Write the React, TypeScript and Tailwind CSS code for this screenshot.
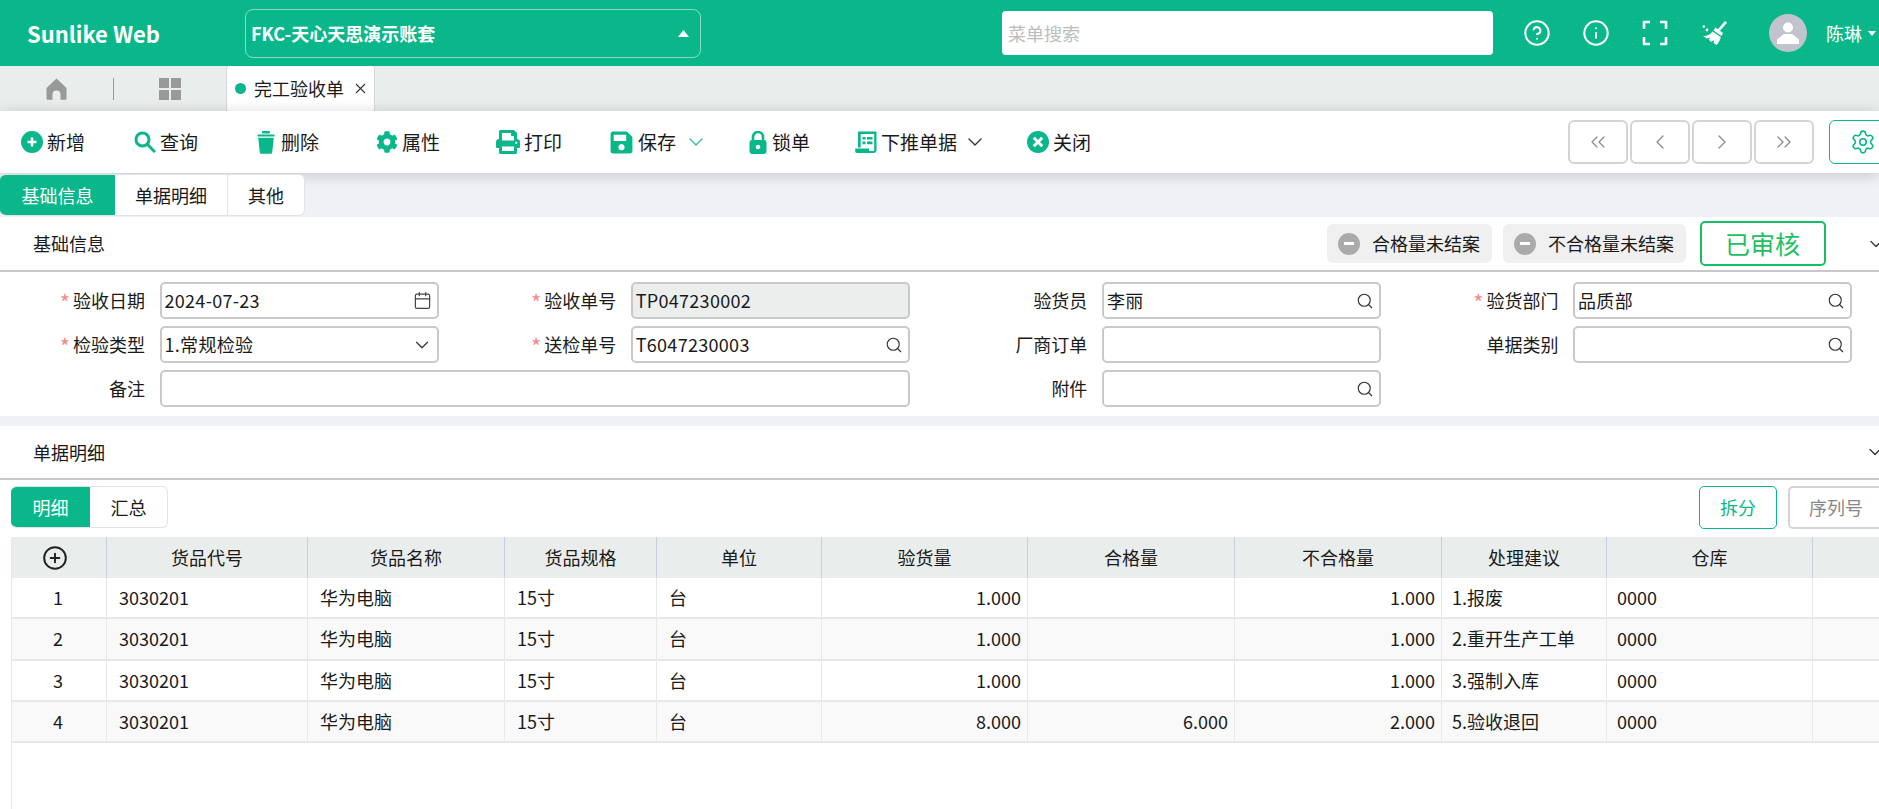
import React from 'react';
import {
  Calendar,
  ChevronDown,
  ChevronLeft,
  ChevronRight,
  ChevronsLeft,
  ChevronsRight,
  CircleHelp,
  CirclePlus,
  Info,
  Search,
  Settings,
  X,
} from 'lucide-react';
import { FaCog, FaPrint, FaSave } from 'react-icons/fa';

const PlusCircleIcon = () => (
  <svg width="22" height="22" viewBox="0 0 22 22">
    <circle cx="11" cy="11" r="11" fill="#0ab78b" />
    <path d="M11 6.5v9M6.5 11h9" stroke="#fff" strokeWidth="2.6" />
  </svg>
);

const CloseCircleIcon = () => (
  <svg width="22" height="22" viewBox="0 0 22 22">
    <circle cx="11" cy="11" r="11" fill="#0ab78b" />
    <path d="M6.8 6.8l8.4 8.4M15.2 6.8l-8.4 8.4" stroke="#fff" strokeWidth="3" />
  </svg>
);

const SearchIcon = () => (
  <svg width="22" height="22" viewBox="0 0 22 22" fill="none" stroke="#0ab78b" strokeWidth="3">
    <circle cx="8.5" cy="8.5" r="6.5" />
    <path d="M13.5 13.5 21 21" />
  </svg>
);

const TrashIcon = () => (
  <svg className="mr-[2px]" width="18" height="23" viewBox="0 0 18 23" fill="#0ab78b">
    <rect x="5" y="0" width="8" height="2.4" rx="1" />
    <rect x="0.5" y="3.4" width="17" height="2.2" rx="0.6" />
    <path d="M1.2 6.8h15.6l-1.6 14.6a1.4 1.4 0 0 1-1.4 1.3H4.2a1.4 1.4 0 0 1-1.4-1.3z" />
  </svg>
);

const LockIcon = () => (
  <svg className="mr-[1px]" width="18" height="23" viewBox="0 0 18 23">
    <path d="M4 10V6a5 5 0 0 1 10 0v4" fill="none" stroke="#0ab78b" strokeWidth="2.6" />
    <rect x="0.5" y="9" width="17" height="14" rx="2.4" fill="#0ab78b" />
    <circle cx="9" cy="16" r="2.3" fill="#fff" />
  </svg>
);

const PushIcon = () => (
  <svg width="22" height="23" viewBox="0 0 22 23" fill="#0ab78b">
    <path d="M3 0.5h18.5v18.5a3 3 0 0 1-3 3H2a1.8 1.8 0 0 1-1.8-1.8v-2.7h13.8v2.5h4a1.2 1.2 0 0 0 1.2-1.3V3H5.7v13.5H3z" />
    <path d="M7.5 6h3v2.6h-3zM12 6h5.5v2.6H12zM7.5 10.6h3v2.6h-3zM12 10.6h5.5v2.6H12z" />
  </svg>
);

const FullscreenIcon = () => (
  <svg width="26" height="26" viewBox="0 0 26 26" fill="none" stroke="#fff" strokeWidth="2.6" strokeLinejoin="round">
    <path d="M2 9V2h6M18 2h6v7M24 17v7h-6M8 24H2v-7" />
  </svg>
);

const BroomIcon = () => (
  <svg width="25" height="24" viewBox="0 0 25 24" fill="#fff">
    <path d="M24 0.8 16.5 9.5" stroke="#fff" strokeWidth="2.6" fill="none" />
    <path d="M13.5 6.5 21 12 19.5 15 11.5 9.5z" />
    <path d="M10.5 10.5 18.8 16c-.6 3-2.2 5.6-4.3 8l-3-2.2.8-2.8-3.2 2-2.2-2.4 1.4-2-3.4 1L1 15.2c4.2-.2 7.4-1.6 9.5-4.7z" />
    <circle cx="1.8" cy="5.5" r="1.2" />
    <circle cx="5" cy="9" r="1.4" />
  </svg>
);

const HomeIcon = () => (
  <svg width="21" height="22" viewBox="0 0 21 22" fill="#999">
    <path d="M10.5 0.5 20.5 10v10.5a1.2 1.2 0 0 1-1.2 1.2h-4.8v-5.2a4 4 0 0 0-8 0v5.2H1.7a1.2 1.2 0 0 1-1.2-1.2V10z" />
  </svg>
);

const AvatarIcon = () => (
  <div className="flex h-[38px] w-[38px] items-center justify-center rounded-full bg-[#c1c4cc]">
    <svg width="24" height="24" viewBox="0 0 24 24" fill="#fff">
      <circle cx="12" cy="6.5" r="5" />
      <path d="M1 23v-4.5l7-5.5h8l7 5.5V23z" />
    </svg>
  </div>
);

const toolbarItems = [
  { label: '新增', width: 'w-[113px]', icon: <PlusCircleIcon /> },
  { label: '查询', width: 'w-[123px]', icon: <SearchIcon /> },
  { label: '删除', width: 'w-[119px]', icon: <TrashIcon /> },
  { label: '属性', width: 'w-[120px]', icon: <FaCog size={22} color="#0ab78b" /> },
  { label: '打印', width: 'w-[113px]', icon: <FaPrint size={24} color="#0ab78b" /> },
  { label: '保存', width: 'w-[140px]', icon: <FaSave size={25} color="#0ab78b" />, caret: 'ml-[8px] text-[#2fc19c]' },
  { label: '锁单', width: 'w-[106px]', icon: <LockIcon /> },
  { label: '下推单据', width: 'w-[172px]', icon: <PushIcon />, caret: 'ml-[6px] text-[#333]' },
  { label: '关闭', width: 'w-[100px]', icon: <CloseCircleIcon /> },
];

const Label = ({ text, required }: { text: string; required?: boolean }) => (
  <div className="flex w-[145px] shrink-0 items-center justify-end text-[18px] text-[#1a1a1a]">
    {required && <span className="mr-[3px] text-[22px] leading-none text-[#f78989]">*</span>}
    {text}
  </div>
);

const Input = ({
  value,
  icon,
  disabled,
  wide,
}: {
  value?: string;
  icon?: 'search' | 'calendar' | 'down';
  disabled?: boolean;
  wide?: boolean;
}) => (
  <div
    className={`ml-[14.5px] flex h-[37px] items-center justify-between rounded-[5px] border-2 border-[#c9c9c9] pl-[3px] pr-[4px] text-[18px] text-[#1a1a1a] ${
      wide ? 'flex-1' : 'w-[279px]'
    } ${disabled ? 'bg-[#eceeee]' : 'bg-white'}`}
  >
    <span className="tracking-[0.3px]">{value}</span>
    {icon === 'search' && <Search size={18} strokeWidth={1.5} className="mr-[1px] text-[#333]" />}
    {icon === 'calendar' && <Calendar size={19} strokeWidth={1.5} className="mr-[1px] text-[#444]" />}
    {icon === 'down' && <ChevronDown size={22} strokeWidth={1.3} className="text-[#333]" />}
  </div>
);

const columns = ['货品代号', '货品名称', '货品规格', '单位', '验货量', '合格量', '不合格量', '处理建议', '仓库', '仓库名称'];

const rows = [
  { no: 1, qty: '1.000', good: '', bad: '1.000', advice: '1.报废' },
  { no: 2, qty: '1.000', good: '', bad: '1.000', advice: '2.重开生产工单' },
  { no: 3, qty: '1.000', good: '', bad: '1.000', advice: '3.强制入库' },
  { no: 4, qty: '8.000', good: '6.000', bad: '2.000', advice: '5.验收退回' },
];

const gridCols = 'grid grid-cols-[95px_201px_197px_152px_165px_206px_207px_207px_165px_206px_206px]';

const Cell = ({ children, right, tight }: { children?: React.ReactNode; right?: boolean; tight?: boolean }) => (
  <div
    className={`flex items-center border-r border-[#e8e8e8] ${
      right ? 'justify-end pr-[6px]' : tight ? 'pl-[10px]' : 'pl-[12px]'
    }`}
  >
    {children}
  </div>
);

export default function App() {
  return (
    <div className="h-screen w-full overflow-hidden bg-white font-['Noto_Sans_CJK_SC',sans-serif] text-[18px] text-[#1a1a1a]">
      {/* Header */}
      <div className="flex h-[66px] items-center bg-[#0ab78b] text-white">
        <div className="w-[245px] shrink-0 pl-[27px] text-[22px] font-bold">Sunlike Web</div>
        <div className="flex h-[49px] w-[456px] shrink-0 items-center justify-between rounded-lg border border-white/50 pl-[5px] pr-[11px] text-[18px] font-bold">
          <span>FKC-天心天思演示账套</span>
          <svg width="11" height="7" viewBox="0 0 11 7" fill="#fff">
            <path d="M5.5 0 11 7H0z" />
          </svg>
        </div>
        <div className="ml-[301px] flex h-[44px] w-[491px] shrink-0 items-center rounded-[4px] bg-white pl-[6px] text-[18px] text-[#bdbdbd]">
          菜单搜索
        </div>
        <div className="ml-[14.5px] flex w-[59px] shrink-0 justify-center">
          <CircleHelp size={28} strokeWidth={1.75} />
        </div>
        <div className="flex w-[59px] shrink-0 justify-center">
          <Info size={28} strokeWidth={1.75} />
        </div>
        <div className="flex w-[59px] shrink-0 justify-center">
          <FullscreenIcon />
        </div>
        <div className="flex w-[59px] shrink-0 justify-center">
          <BroomIcon />
        </div>
        <div className="ml-[25.5px] shrink-0">
          <AvatarIcon />
        </div>
        <span className="ml-[19px] shrink-0 text-[18px]">陈琳</span>
        <svg className="ml-[6px] shrink-0" width="8" height="5" viewBox="0 0 8 5" fill="#fff">
          <path d="M0 0h8L4 5z" />
        </svg>
      </div>

      {/* Page tabs */}
      <div className="flex h-[45px] items-center bg-[#e9edec] pl-[46px]">
        <HomeIcon />
        <div className="ml-[46px] h-[22px] w-px bg-[#999]" />
        <div className="ml-[45px] grid h-[22px] w-[22px] grid-cols-2 gap-[2px]">
          <div className="bg-[#999]" />
          <div className="bg-[#999]" />
          <div className="bg-[#999]" />
          <div className="bg-[#999]" />
        </div>
        <div className="ml-[45px] flex h-full w-[149px] items-center rounded-t-[4px] border-x border-[#d5d8da] bg-white pl-[8px]">
          <span className="h-[11px] w-[11px] rounded-full bg-[#0ab78b]" />
          <span className="ml-[8px] text-[18px]">完工验收单</span>
          <X size={17} strokeWidth={1.5} className="ml-[8px] text-[#333]" />
        </div>
      </div>

      {/* Toolbar */}
      <div className="relative z-10 flex h-[62px] items-center overflow-hidden bg-white pl-[21px] shadow-[0_2px_14px_rgba(0,0,0,0.18)]">
        <div className="flex w-[1547px] shrink-0 items-center">
          {toolbarItems.map((item) => (
            <div key={item.label} className={`flex shrink-0 items-center ${item.width}`}>
              {item.icon}
              <span className="ml-[4px] text-[19px]">{item.label}</span>
              {item.caret && <ChevronDown size={24} strokeWidth={1.4} className={item.caret} />}
            </div>
          ))}
        </div>
        <div className="flex shrink-0 gap-[2px]">
          <button className="flex h-[44px] w-[60px] items-center justify-center rounded-[6px] border-2 border-[#d4d4d4] text-[#888]">
            <ChevronsLeft size={24} strokeWidth={1.2} />
          </button>
          <button className="flex h-[44px] w-[60px] items-center justify-center rounded-[6px] border-2 border-[#d4d4d4] text-[#888]">
            <ChevronLeft size={24} strokeWidth={1.2} />
          </button>
          <button className="flex h-[44px] w-[60px] items-center justify-center rounded-[6px] border-2 border-[#d4d4d4] text-[#888]">
            <ChevronRight size={24} strokeWidth={1.2} />
          </button>
          <button className="flex h-[44px] w-[60px] items-center justify-center rounded-[6px] border-2 border-[#d4d4d4] text-[#888]">
            <ChevronsRight size={24} strokeWidth={1.2} />
          </button>
        </div>
        <button className="ml-[15px] flex h-[44px] w-[68px] shrink-0 items-center justify-center rounded-[6px] border border-[#0ab78b] text-[#0ab78b]">
          <Settings size={26} strokeWidth={1.5} />
        </button>
      </div>

      {/* Form tabs */}
      <div className="h-[44px] bg-[#f0f1f5] pt-px">
        <div className="relative z-20 flex h-[42px] w-[305px] overflow-hidden rounded-[6px] border border-l-0 border-[#e2e3e8] bg-white text-[18px]">
          <div className="flex w-[115px] items-center justify-center bg-[#0ab78b] text-white">基础信息</div>
          <div className="flex w-[113px] items-center justify-center border-r border-[#e2e3e8]">单据明细</div>
          <div className="flex flex-1 items-center justify-center">其他</div>
        </div>
      </div>

      {/* Basic info */}
      <div className="flex h-[55px] items-center overflow-hidden border-b-2 border-[#c8c8c8]">
        <div className="w-[1327px] shrink-0 pl-[33px]">基础信息</div>
        <div className="flex h-[39px] w-[165px] shrink-0 items-center rounded-[6px] bg-[#f0f0f0] pl-[11px]">
          <span className="flex h-[22px] w-[22px] items-center justify-center rounded-full bg-[#aaa]">
            <span className="h-[3px] w-[10px] bg-white" />
          </span>
          <span className="ml-[12px]">合格量未结案</span>
        </div>
        <div className="ml-[11px] flex h-[39px] w-[183px] shrink-0 items-center rounded-[6px] bg-[#f0f0f0] pl-[11px]">
          <span className="flex h-[22px] w-[22px] items-center justify-center rounded-full bg-[#aaa]">
            <span className="h-[3px] w-[10px] bg-white" />
          </span>
          <span className="ml-[12px]">不合格量未结案</span>
        </div>
        <div className="ml-[13.5px] flex h-[45px] w-[126px] shrink-0 items-center justify-center rounded-[5px] border-2 border-[#13c068] text-[25px] text-[#22bf62]">
          已审核
        </div>
        <ChevronDown size={20} strokeWidth={1.5} className="ml-[40px] shrink-0 text-[#333]" />
      </div>

      <div className="grid grid-cols-[repeat(4,471.2px)] gap-y-[7px] pb-[9px] pt-[10px]">
        <div className="flex">
          <Label text="验收日期" required />
          <Input value="2024-07-23" icon="calendar" />
        </div>
        <div className="flex">
          <Label text="验收单号" required />
          <Input value="TP047230002" disabled />
        </div>
        <div className="flex">
          <Label text="验货员" />
          <Input value="李丽" icon="search" />
        </div>
        <div className="flex">
          <Label text="验货部门" required />
          <Input value="品质部" icon="search" />
        </div>
        <div className="flex">
          <Label text="检验类型" required />
          <Input value="1.常规检验" icon="down" />
        </div>
        <div className="flex">
          <Label text="送检单号" required />
          <Input value="T6047230003" icon="search" />
        </div>
        <div className="flex">
          <Label text="厂商订单" />
          <Input />
        </div>
        <div className="flex">
          <Label text="单据类别" />
          <Input icon="search" />
        </div>
        <div className="col-span-2 flex pr-[32px]">
          <Label text="备注" />
          <Input wide />
        </div>
        <div className="flex">
          <Label text="附件" />
          <Input icon="search" />
        </div>
      </div>

      <div className="h-[10px] bg-[#f0f1f5]" />

      {/* Detail */}
      <div className="flex h-[54px] items-center overflow-hidden border-b-2 border-[#c8c8c8]">
        <div className="w-[1865px] shrink-0 pl-[33px]">单据明细</div>
        <ChevronDown size={20} strokeWidth={1.5} className="shrink-0 text-[#333]" />
      </div>

      <div className="flex h-[57px] overflow-hidden pl-[11px] pt-[6px]">
        <div className="flex h-[42px] w-[157px] shrink-0 overflow-hidden rounded-[6px] border border-l-0 border-[#e2e3e8]">
          <div className="flex w-[79px] items-center justify-center bg-[#0ab78b] text-white">明细</div>
          <div className="flex flex-1 items-center justify-center">汇总</div>
        </div>
        <button className="ml-[1531px] flex h-[43px] w-[78px] shrink-0 items-center justify-center rounded-[5px] border border-[#0ab78b] text-[#0ab78b]">
          拆分
        </button>
        <button className="ml-[11px] flex h-[43px] w-[96px] shrink-0 items-center justify-center rounded-[5px] border-2 border-[#d4d4d4] text-[#888]">
          序列号
        </button>
      </div>

      <div className="ml-[11px] h-[280px] overflow-hidden border-l border-[#e8e8e8]">
        <div className={`${gridCols} h-[41px] bg-[#e9edec]`}>
          <div className="flex items-center justify-center border-r border-[#c8cfdb] pr-[8px]">
            <CirclePlus size={26} strokeWidth={1.8} className="text-[#222]" />
          </div>
          {columns.map((col) => (
            <div key={col} className="flex items-center justify-center border-r border-[#c8cfdb]">
              {col}
            </div>
          ))}
        </div>
        {rows.map((row) => (
          <div
            key={row.no}
            className={`${gridCols} h-[41.25px] border-b-2 border-[#e8e8e8] ${row.no % 2 === 0 ? 'bg-[#f9f9f9]' : 'bg-white'}`}
          >
            <div className="flex items-center justify-center border-r border-[#e8e8e8] pr-[2px]">{row.no}</div>
            <Cell>3030201</Cell>
            <Cell>华为电脑</Cell>
            <Cell>15寸</Cell>
            <Cell>台</Cell>
            <Cell right>{row.qty}</Cell>
            <Cell right>{row.good}</Cell>
            <Cell right>{row.bad}</Cell>
            <Cell tight>{row.advice}</Cell>
            <Cell tight>0000</Cell>
            <Cell />
          </div>
        ))}
      </div>
    </div>
  );
}
